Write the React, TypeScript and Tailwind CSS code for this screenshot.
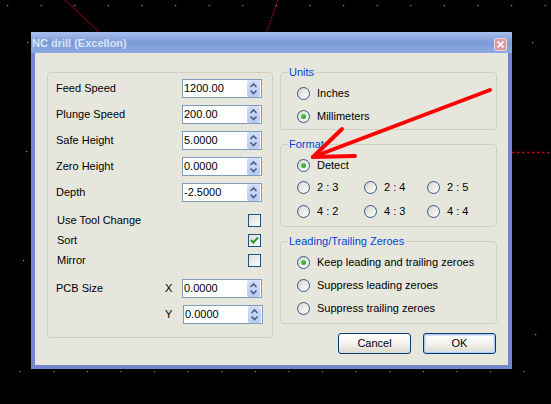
import React from "react";

function SpinBox({ value, className = "" }: { value: string; className?: string }) {
  return (
    <div className={"flex h-[19px] w-[80px] items-center border border-[#7f9db9] bg-white " + className}>
      <span className="flex-1 pl-[1px] text-[11px] leading-none text-black">{value}</span>
      <div className="mr-px h-[17px] w-[13px] rounded-[2px] bg-gradient-to-b from-[#d2defb] to-[#b8caf3]">
        <svg width="13" height="17" viewBox="0 0 13 17">
          <polyline points="3.5,7 6.5,4 9.5,7" fill="none" stroke="#4d6185" strokeWidth="1.7" />
          <polyline points="3.5,10.5 6.5,13.5 9.5,10.5" fill="none" stroke="#4d6185" strokeWidth="1.7" />
        </svg>
      </div>
    </div>
  );
}

function CheckBox({ checked }: { checked?: boolean }) {
  return (
    <span className="flex h-[13px] w-[13px] items-center justify-center border border-[#1c5180] bg-gradient-to-br from-[#dcdcd7] to-white">
      {checked && (
        <svg width="11" height="11" viewBox="0 0 11 11">
          <polyline points="2,5 4.3,7.5 9,2.5" fill="none" stroke="#21a121" strokeWidth="2" />
        </svg>
      )}
    </span>
  );
}

function Radio({ checked }: { checked?: boolean }) {
  return (
    <span className="flex h-[13px] w-[13px] shrink-0 items-center justify-center rounded-full border border-[#2f5a88] bg-gradient-to-br from-[#d6d6d0] to-white">
      {checked && <span className="h-[5px] w-[5px] rounded-full bg-gradient-to-br from-[#5ed85a] to-[#1f9a1f]" />}
    </span>
  );
}

function RadioRow({ label, checked }: { label: string; checked?: boolean }) {
  return (
    <div className="flex h-[14px] items-center gap-[7px]">
      <Radio checked={checked} />
      <span className="text-[11px] leading-none text-black">{label}</span>
    </div>
  );
}

function Group({ label, className = "", children }: { label: string; className?: string; children: React.ReactNode }) {
  return (
    <div className={"relative rounded-[4px] border border-[#d0d0bf] " + className}>
      <span className="absolute left-[7px] top-[-7px] bg-[#e6e6dd] px-[1px] text-[11px] leading-[13px] text-[#0046d5]">
        {label}
      </span>
      {children}
    </div>
  );
}

export default function App() {
  const topDots = Array.from({ length: 17 }, (_, k) => 7 + 33.6 * k);
  const bottomDots = Array.from({ length: 16 }, (_, k) => 19.6 + 33.6 * k);
  return (
    <div className="relative h-[404px] w-[551px] overflow-hidden bg-black pl-[31px] pt-[32px] font-['Liberation_Sans',Arial,sans-serif]">
      {/* canvas background */}
      <svg className="absolute left-0 top-0" width="551" height="404" viewBox="0 0 551 404">
        {topDots.map((x) => (
          <rect key={"t" + x} x={x} y={5} width={1.2} height={1.2} fill="#9a9a9a" />
        ))}
        {bottomDots.map((x) => (
          <rect key={"b" + x} x={x} y={371} width={1.2} height={1.2} fill="#8a8a8a" />
        ))}
        <rect x={27} y={42} width={1.2} height={1.2} fill="#9a9a9a" />
        <rect x={26} y={151} width={1.2} height={1.2} fill="#9a9a9a" />
        <rect x={23} y={260} width={1.2} height={1.2} fill="#9a9a9a" />
        <rect x={532} y={42} width={1.2} height={1.2} fill="#9a9a9a" />
        <rect x={535} y={334} width={1.2} height={1.2} fill="#9a9a9a" />
        <line x1={65} y1={0} x2={99} y2={32} stroke="#8a0a18" strokeWidth="1.2" strokeDasharray="2 1" />
        <line x1={278} y1={0} x2={267} y2={32} stroke="#8a0a18" strokeWidth="1.2" strokeDasharray="2 1" />
        <line x1={512} y1={152.5} x2={551} y2={152.5} stroke="#c8001a" strokeWidth="1.3" strokeDasharray="2.5 2.5" />
      </svg>

      {/* dialog window */}
      <div className="relative flex h-[337px] w-[481px] flex-col bg-[#7586cf]">
        <div className="flex h-[21px] items-start overflow-hidden bg-gradient-to-b from-[#a9c0ee] via-[#7c9ad8] to-[#8eabe3]">
          <span className="ml-[1px] mt-[5px] flex-1 text-[11px] font-bold leading-[13px] text-[#dbe5f7]">
            NC drill (Excellon)
          </span>
          <div className="mr-[5px] mt-[6px] flex h-[13px] w-[13px] items-center justify-center rounded-[2px] border border-[#f0d6da] bg-[#d89aa4]">
            <svg width="9" height="9" viewBox="0 0 9 9">
              <line x1="1.5" y1="1.5" x2="7.5" y2="7.5" stroke="#fbeef0" strokeWidth="1.8" />
              <line x1="7.5" y1="1.5" x2="1.5" y2="7.5" stroke="#fbeef0" strokeWidth="1.8" />
            </svg>
          </div>
        </div>

        <div className="mx-[4px] mb-[4px] flex flex-1 items-start gap-[7px] bg-[#e6e6dd] pl-[12px] pt-[19px]">
          {/* left group */}
          <div className="flex h-[266px] w-[226px] flex-col rounded-[4px] border border-[#d0d0bf] pl-[8px] pt-[6px] text-[11px] leading-none text-black">
            {[
              ["Feed Speed", "1200.00"],
              ["Plunge Speed", "200.00"],
              ["Safe Height", "5.0000"],
              ["Zero Height", "0.0000"],
              ["Depth", "-2.5000"],
            ].map(([l, v], i) => (
              <div key={l} className={"flex h-[19px] items-center " + (i > 0 ? "mt-[7px]" : "")}>
                <span className="w-[126px]">{l}</span>
                <SpinBox value={v} />
              </div>
            ))}
            {[
              ["Use Tool Change", false],
              ["Sort", true],
              ["Mirror", false],
            ].map(([l, c], i) => (
              <div key={l as string} className={"flex h-[13px] items-center " + (i > 0 ? "mt-[7px]" : "mt-[12px]")}>
                <span className="w-[192px] pl-px">{l as string}</span>
                <CheckBox checked={c as boolean} />
              </div>
            ))}
            <div className="mt-[12px] flex h-[19px] items-center">
              <span className="w-[109px]">PCB Size</span>
              <span className="w-[17px]">X</span>
              <SpinBox value="0.0000" />
            </div>
            <div className="mt-[7px] flex h-[19px] items-center">
              <span className="w-[109px]" />
              <span className="w-[18px]">Y</span>
              <SpinBox value="0.0000" />
            </div>
          </div>

          {/* right column */}
          <div className="flex w-[217px] flex-col">
            <Group label="Units" className="pb-[6px] pl-[16px] pt-[13px]">
              <div className="flex flex-col gap-[9px]">
                <RadioRow label="Inches" />
                <RadioRow label="Millimeters" checked />
              </div>
            </Group>
            <Group label="Format" className="mt-[14px] pb-[8px] pl-[16px] pt-[13px]">
              <RadioRow label="Detect" checked />
              <div className="mt-[8px] grid grid-cols-[67px_63px_1fr] gap-y-[10px]">
                <RadioRow label="2 : 3" />
                <RadioRow label="2 : 4" />
                <RadioRow label="2 : 5" />
                <RadioRow label="4 : 2" />
                <RadioRow label="4 : 3" />
                <RadioRow label="4 : 4" />
              </div>
            </Group>
            <Group label="Leading/Trailing Zeroes" className="mt-[14px] pb-[8px] pl-[16px] pt-[13px]">
              <div className="flex flex-col gap-[9px]">
                <RadioRow label="Keep leading and trailing zeroes" checked />
                <RadioRow label="Suppress leading zeroes" />
                <RadioRow label="Suppress trailing zeroes" />
              </div>
            </Group>
            <div className="mt-[9px] flex justify-end gap-[12px] pr-px">
              <button className="flex h-[21px] w-[73px] items-center justify-center rounded-[3px] border border-[#003c74] bg-gradient-to-b from-white via-[#f4f3ee] to-[#dcdad0] text-[11px] leading-none text-black">
                Cancel
              </button>
              <button className="flex h-[21px] w-[73px] items-center justify-center rounded-[3px] border border-[#003c74] bg-gradient-to-b from-white via-[#f4f3ee] to-[#dcdad0] text-[11px] leading-none text-black shadow-[inset_0_0_0_1px_#b4c9f0,inset_0_0_0_2px_#d6e2f7]">
                OK
              </button>
            </div>
          </div>
        </div>
      </div>

      {/* red annotation arrow */}
      <svg className="pointer-events-none absolute left-0 top-0" width="551" height="404" viewBox="0 0 551 404">
        <g stroke="#ff0000" strokeWidth="4" strokeLinecap="round" fill="none">
          <line x1={490} y1={90} x2={313} y2={157} />
          <line x1={313} y1={157} x2={342} y2={129} />
          <line x1={313} y1={157} x2={355} y2={156} />
        </g>
      </svg>
    </div>
  );
}
